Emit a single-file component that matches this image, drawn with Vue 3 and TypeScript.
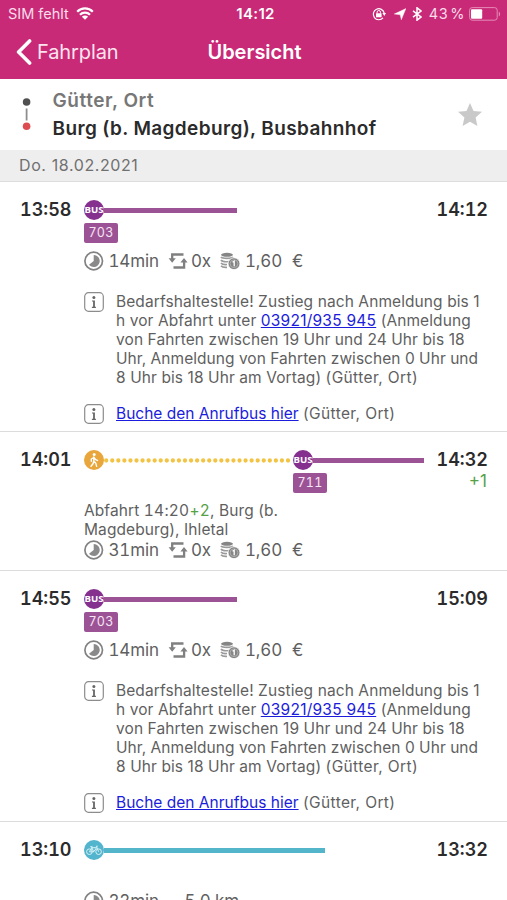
<script setup lang="ts">
interface Leg {
  kind: 'bus' | 'walk' | 'bike'
  width: number
  line?: string
}
interface Trip {
  dep: string
  arr: string
  delay?: string
  legs: Leg[]
  info?: boolean
  duration: string
  price?: string
  distance?: string
  notes?: boolean
}

const regional: Trip = {
  dep: '13:58',
  arr: '14:12',
  legs: [{ kind: 'bus', width: 153, line: '703' }],
  duration: '14min',
  price: '1,60',
  notes: true,
}

const trips: Trip[] = [
  regional,
  {
    dep: '14:01',
    arr: '14:32',
    delay: '+1',
    legs: [
      { kind: 'walk', width: 209 },
      { kind: 'bus', width: 131, line: '711' },
    ],
    info: true,
    duration: '31min',
    price: '1,60',
  },
  { ...regional, dep: '14:55', arr: '15:09' },
  {
    dep: '13:10',
    arr: '13:32',
    legs: [{ kind: 'bike', width: 241 }],
    duration: '22min',
    distance: '5,0 km',
  },
]
</script>

<template>
  <div class="screen">
    <header class="top">
      <div class="status">
        <div class="carrier">
          <span class="sim">SIM fehlt</span>
          <svg class="wifi" viewBox="0 0 18 13" width="18" height="13">
            <g fill="none" stroke="#fff" stroke-width="2.3">
              <path d="M1.2 4.7a11 11 0 0 1 15.6 0" />
              <path d="M4 7.8a7 7 0 0 1 10 0" />
            </g>
            <path d="M9 12.8L5.9 9.8a4.4 4.4 0 0 1 6.2 0z" fill="#fff" />
          </svg>
        </div>
        <span class="clock">14:12</span>
        <div class="indicators">
          <svg viewBox="0 0 14 14" width="14" height="14">
            <path d="M11 10.800A5.500 5.500 0 1 1 12.200 6.200" fill="none" stroke="#fff" stroke-width="1.200" />
            <path d="M10.400 6h3.600l-1.700 2.900z" fill="#fff" />
            <rect x="4" y="6.200" width="5.600" height="4" rx=".5" fill="#fff" />
            <path d="M5.100 6.400V5.200a1.700 1.700 0 0 1 3.400 0v1.200" fill="none" stroke="#fff" stroke-width="1" />
          </svg>
          <svg class="arrow" viewBox="0 0 12 12" width="12" height="12">
            <path d="M11.900.6L7.300 11.800 6.200 6.800.2 6z" fill="#fff" stroke="#fff" stroke-width=".4" />
          </svg>
          <svg class="bt" viewBox="0 0 10 14" width="10" height="14">
            <path d="M1 3.800l8 6.200-4 3.200V.8L9 4 1 10.200" fill="none" stroke="#fff" stroke-width="1.500" />
          </svg>
          <span class="percent">43 %</span>
          <svg viewBox="0 0 32 14" width="32" height="14">
            <rect x=".6" y=".6" width="27.6" height="12.6" rx="2.6" fill="none" stroke="#e58bb8" stroke-width="1" />
            <rect x="2" y="2.200" width="11.200" height="9.500" rx="1" fill="#fff" />
            <path d="M29.800 4.700c1.700.6 1.700 4 0 4.600z" fill="#e58bb8" />
          </svg>
        </div>
      </div>
      <div class="nav">
        <div class="back">
          <svg viewBox="0 0 16 26" width="16" height="26">
            <path d="M13.600 2L2.600 13l11 11" fill="none" stroke="#fff" stroke-width="3.600" stroke-linecap="round" stroke-linejoin="round" />
          </svg>
          <span>Fahrplan</span>
        </div>
        <h1>Übersicht</h1>
      </div>
    </header>

    <section class="route">
      <svg class="stops" viewBox="0 0 10 34" width="10" height="34">
        <circle cx="4.600" cy="5" r="3.800" fill="#505050" />
        <path d="M4.600 11.500v12" stroke="#8d8d8d" stroke-width="1.800" />
        <circle cx="4.600" cy="29.300" r="3.800" fill="#dd4c50" />
      </svg>
      <div class="names">
        <div class="from">Gütter, Ort</div>
        <div class="to">Burg (b. Magdeburg), Busbahnhof</div>
      </div>
      <svg class="star" viewBox="0 0 24 23" width="24" height="23">
        <path d="M12 0l3.500 7.900 8.500.9-6.400 5.700 1.800 8.500L12 18.700 4.600 23l1.800-8.500L0 8.800l8.500-.9z" fill="#c9c9c9" />
      </svg>
    </section>

    <div class="date">Do. 18.02.2021</div>

    <article v-for="trip in trips" :key="trip.dep" class="trip">
      <div class="time">{{ trip.dep }}</div>
      <div class="body">
        <div class="legs">
          <div v-for="leg in trip.legs" :key="leg.kind" class="leg" :style="{ width: leg.width + 'px' }">
            <div class="track">
              <svg v-if="leg.kind === 'walk'" class="line" width="189" height="5">
                <path d="M2.200 2.500H189" fill="none" stroke="#f3c443" stroke-width="4.300" stroke-linecap="round" stroke-dasharray="0 6.060" />
              </svg>
              <div v-else class="line" :class="leg.kind"></div>
              <div class="mode" :class="leg.kind">
                <span v-if="leg.kind === 'bus'">BUS</span>
                <svg v-else-if="leg.kind === 'walk'" viewBox="0 0 20 20" width="20" height="20">
                  <circle cx="10.200" cy="4.600" r="1.500" fill="#fff" />
                  <path d="M9.800 7v4.500M9.800 11l2 2.200.8 3.100M9.700 11.200l-.7 2.600-2 2.500M9.800 7.500L7.300 9v2.200M10.200 7.600l1.400 2 1.900.8" fill="none" stroke="#fff" stroke-width="1.400" stroke-linecap="round" stroke-linejoin="round" />
                </svg>
                <svg v-else viewBox="0 0 20 20" width="20" height="20">
                  <g fill="none" stroke="#d7f1f6" stroke-width="1">
                    <circle cx="5.400" cy="11.700" r="2.800" />
                    <circle cx="14.600" cy="11.700" r="2.800" />
                    <path d="M5.400 11.700l2.500-4h4.700l-2.900 4.100H5.400M9.700 11.800L7.500 6.800M6.300 6.700h2.200M14.600 11.700l-2.300-5.500h1.500" />
                  </g>
                </svg>
              </div>
            </div>
            <span v-if="leg.line" class="badge">{{ leg.line }}</span>
          </div>
        </div>

        <p v-if="trip.info" class="info">Abfahrt <span class="at">14:20<em>+2</em></span>, Burg (b.<br />Magdeburg), Ihletal</p>

        <div class="meta">
          <svg viewBox="0 0 20 20" width="20" height="20">
            <circle cx="9.700" cy="10" r="8.800" fill="none" stroke="#828282" stroke-width="1.700" />
            <path d="M9.700 4a6 6 0 1 1-4.700 9.700L9.700 10z" fill="#8a8a8a" />
          </svg>
          <span class="duration">{{ trip.duration }}</span>
          <template v-if="trip.price">
            <svg viewBox="0 0 20 18" width="20" height="18">
              <path d="M15.500 2.500H4.200V8M5.500 15.500h10.600V9.500" fill="none" stroke="#808080" stroke-width="2.300" />
              <path d="M.6 6.300h7.200L4.200 10.800zM12.400 10.600h7.200L16 6z" fill="#808080" />
            </svg>
            <span class="changes">0x</span>
            <svg viewBox="0 0 20 18" width="20" height="18">
              <ellipse cx="7" cy="2.800" rx="6" ry="2" fill="#858585" />
              <path d="M1 5c1.200 1.800 10.600 1.800 12 0M1 8c1 1.500 5 1.900 8 1.500M1 11c1 1.200 4 1.700 6 1.500M1 13.800c1 1.200 4 1.700 6 1.500" fill="none" stroke="#9a9a9a" stroke-width="1.700" />
              <circle cx="14" cy="11.700" r="5.900" fill="#858585" stroke="#fff" stroke-width=".7" />
              <circle cx="14" cy="11.700" r="3.900" fill="none" stroke="#b8b8b8" stroke-width=".8" />
              <path d="M12.600 10.300l1.600-1.100v5" fill="none" stroke="#fff" stroke-width="1.300" />
            </svg>
            <span class="price">{{ trip.price }}</span>
            <span class="euro">€</span>
          </template>
          <span v-else class="distance">{{ trip.distance }}</span>
        </div>

        <div v-if="trip.notes" class="notes">
          <div class="note">
            <span class="i"><svg viewBox="0 0 20 20" width="20" height="20">
              <rect x=".7" y=".7" width="18.600" height="18.600" rx="3.800" fill="none" stroke="#8c8c8c" stroke-width="1.200" />
              <circle cx="9.900" cy="5.400" r="1.500" fill="#666" />
              <path d="M8 8.400h2.900v6.400h1v1.200H7.900v-1.200h1.200V9.500H8z" fill="#666" />
            </svg></span>
            <p>Bedarfshaltestelle! Zustieg nach Anmeldung bis 1<br />h vor Abfahrt unter <a class="phone">03921/935 945</a> (Anmeldung<br />von Fahrten zwischen 19 Uhr und 24 Uhr bis 18<br /><span class="tight">Uhr, Anmeldung von Fahrten zwischen 0 Uhr und</span><br />8 Uhr bis 18 Uhr am Vortag) <span class="place">(Gütter, Ort)</span></p>
          </div>
          <div class="note">
            <span class="i"><svg viewBox="0 0 20 20" width="20" height="20">
              <rect x=".7" y=".7" width="18.600" height="18.600" rx="3.800" fill="none" stroke="#8c8c8c" stroke-width="1.200" />
              <circle cx="9.900" cy="5.400" r="1.500" fill="#666" />
              <path d="M8 8.400h2.900v6.400h1v1.200H7.900v-1.200h1.200V9.500H8z" fill="#666" />
            </svg></span>
            <p><a class="book">Buche den Anrufbus hier</a> <span class="place">(Gütter, Ort)</span></p>
          </div>
        </div>
      </div>
      <div class="arrival">
        <div class="time">{{ trip.arr }}</div>
        <div v-if="trip.delay" class="delay">{{ trip.delay }}</div>
      </div>
    </article>
  </div>
</template>

<style>
body {
  margin: 0;
  background: #fff;
  overflow: hidden;
}
</style>

<style scoped>
.screen {
  width: 507px;
  height: 900px;
  overflow: hidden;
  background: #fff;
  color: #5f5f5f;
  font-family: Inter, "Liberation Sans", sans-serif;
  white-space: nowrap;
}
p, h1 { margin: 0; }
svg { display: block; flex: none; }
.top {
  height: 79px;
  background: #c92a77;
  color: #fff;
}
.status {
  display: grid;
  grid-template-columns: 1fr auto 1fr;
  align-items: center;
  height: 27px;
  padding: 0 6px 0 8px;
}
.carrier, .indicators { display: flex; align-items: center; }
.sim { font-size: 14.500px; color: #fbdcea; }
.wifi { margin-left: 7px; }
.clock { padding-left: 2px; font-size: 15px; font-weight: 600; letter-spacing: .35px; }
.indicators { justify-content: flex-end; }
.arrow { margin-left: 8px; }
.bt { margin-left: 6px; }
.percent { margin: 0 4px 0 7px; font-size: 14.500px; color: #fbdcea; letter-spacing: .5px; word-spacing: -2.500px; }
.nav {
  display: grid;
  grid-template-columns: 1fr auto 1fr;
  align-items: center;
  height: 50px;
  padding: 0 14px 0 16px;
}
.back { display: flex; align-items: center; gap: 5px; font-size: 20px; letter-spacing: -.1px; color: #fde4ef; }
h1 { font-size: 20px; font-weight: 600; line-height: 24px; }
.route {
  display: flex;
  box-sizing: border-box;
  height: 71px;
  padding: 8px 25px 0 22px;
}
.stops { margin-top: 10px; }
.names { flex: 1; margin-left: 20.500px; font-weight: 600; font-size: 19px; line-height: 28px; letter-spacing: .37px; }
.from { color: #777; letter-spacing: .55px; }
.to { color: #2b2b2b; }
.star { margin-top: 16px; }
.date {
  box-sizing: border-box;
  height: 32px;
  padding-left: 19px;
  background: #eee;
  border-bottom: 1px solid #dcdcdc;
  font-size: 16px;
  line-height: 31px;
  letter-spacing: .6px;
  color: #707070;
}
.trip {
  display: grid;
  grid-template-columns: 64px 340px 64px;
  padding: 17px 0 9px 20px;
  border-bottom: 1px solid #dcdcdc;
}
.trip:first-of-type { padding-bottom: 8px; }
.time {
  font-size: 18px;
  font-weight: 600;
  line-height: 21px;
  color: #2b2b2b;
  font-variant-numeric: tabular-nums;
}
.arrival { text-align: right; }
.delay { margin-right: 1px; font-size: 17px; line-height: 22px; color: #55a147; }
.body { padding-top: 1px; }
.legs { display: flex; height: 43px; }
.track { display: flex; align-items: center; height: 20px; }
.mode {
  display: flex;
  align-items: center;
  justify-content: center;
  flex: none;
  order: -1;
  width: 20px;
  height: 20px;
  border-radius: 50%;
}
.mode.bus { background: #85308f; color: #fff; font: 700 9.600px/20px "Open Sans", sans-serif; }
.mode.walk { background: #e8a63c; }
.mode.bike { background: #53b5cd; }
.line { flex: 1; }
.line.bus, .line.bike { height: 5px; }
.line.bus { background: #9c5395; }
.line.bike { background: #53b5c9; }
.badge {
  display: block;
  width: 34px;
  height: 20px;
  margin-top: 3px;
  border-radius: 2px;
  background: #9c5395;
  color: #f6e3f4;
  font-size: 12.500px;
  line-height: 20px;
  text-align: center;
  letter-spacing: .2px;
  font-variant-numeric: tabular-nums;
}
.info { margin-top: 8px; margin-bottom: -7px; font-size: 15.500px; line-height: 19px; letter-spacing: .09px; }
.at { letter-spacing: .25px; font-variant-numeric: tabular-nums; }
.info em { font-style: normal; color: #55a147; }
.meta {
  display: flex;
  align-items: center;
  height: 22px;
  margin-top: 7px;
  font-size: 17px;
  letter-spacing: -.15px;
  font-variant-numeric: tabular-nums;
}
.duration { width: 59px; margin-left: 4.500px; }
.changes { width: 29px; margin-left: 3.500px; }
.price { width: 47px; margin-left: 5px; }
.distance { margin-left: 17px; }
.notes { margin-top: 20px; width: 410px; }
.note { display: flex; gap: 12px; font-size: 15.500px; line-height: 19px; letter-spacing: .09px; }
.note + .note { margin-top: 17px; }
.note .i { height: 19px; }
a { color: #1c1cdc; text-decoration: underline; }
.phone { letter-spacing: .24px; }
.book { letter-spacing: .01px; }
.tight { letter-spacing: .04px; }
.place { letter-spacing: .38px; }
</style>
